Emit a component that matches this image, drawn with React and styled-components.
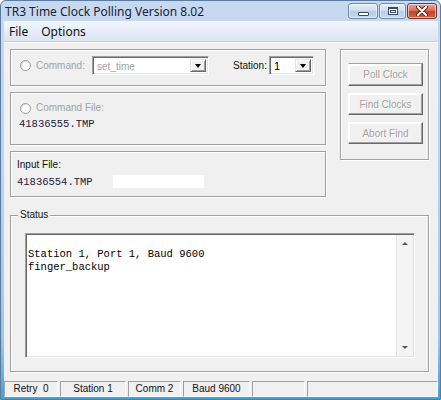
import styled, { createGlobalStyle } from 'styled-components';

const GlobalStyle = createGlobalStyle`
  html, body { margin: 0; padding: 0; background: #fff; }
  body { font-family: 'Liberation Sans', Arial, sans-serif; }
  * { box-sizing: border-box; }
`;

const statusItems = ['Retry  0', 'Station 1', 'Comm 2', 'Baud 9600', '', ''];
const statusWidths = [54, 66, 53, 67, 53];

function App() {
  return (
    <>
      <GlobalStyle />
      <Window>
        <TitleBar>
          <Title>TR3 Time Clock Polling Version 8.02</Title>
          <CaptionButtons>
            <CaptionButton $w={30}>
              <MinGlyph />
            </CaptionButton>
            <CaptionButton $w={27}>
              <MaxGlyph />
            </CaptionButton>
            <CaptionButton $w={30} $close>
              <svg width="12" height="10" viewBox="0 0 12 10">
                <path d="M2 1 L10 9 M10 1 L2 9" stroke="#5a1a10" strokeWidth="4" strokeLinecap="round" />
                <path d="M2 1 L10 9 M10 1 L2 9" stroke="#fff" strokeWidth="2.2" strokeLinecap="round" />
              </svg>
            </CaptionButton>
          </CaptionButtons>
        </TitleBar>

        <Client>
          <MenuBar>
            <MenuItem>File</MenuItem>
            <MenuItem>Options</MenuItem>
          </MenuBar>
          <MenuDivider />

          <Content>
            <TopGrid>
              <LeftColumn>
                <CommandPanel>
                  <Radio />
                  <Label $w={56} $disabled>Command:</Label>
                  <Combo $w={117}>
                    <ComboText $disabled>set_time</ComboText>
                    <DropButton>
                      <DropArrow />
                    </DropButton>
                  </Combo>
                  <Label $w={36} style={{ marginLeft: 24 }}>Station:</Label>
                  <Combo $w={45}>
                    <ComboText>1</ComboText>
                    <DropButton>
                      <DropArrow />
                    </DropButton>
                  </Combo>
                </CommandPanel>

                <FilePanel $h={53} $pt={9} $pl={9}>
                  <RadioRow>
                    <Radio />
                    <Label $disabled>Command File:</Label>
                  </RadioRow>
                  <FileName style={{ marginLeft: -1 }}>41836555.TMP</FileName>
                </FilePanel>

                <FilePanel $h={46} $pt={7} $pl={6}>
                  <Label>Input File:</Label>
                  <InputRow>
                    <FileName $w={96}>41836554.TMP</FileName>
                    <BlankField />
                  </InputRow>
                </FilePanel>
              </LeftColumn>

              <ButtonPanel>
                <ActionButton $h={23} $default>Poll Clock</ActionButton>
                <ActionButton $h={22}>Find Clocks</ActionButton>
                <ActionButton $h={22}>Abort Find</ActionButton>
              </ButtonPanel>
            </TopGrid>

            <StatusGroup>
              <StatusCaption>Status</StatusCaption>
              <LogBox>
                <LogText>
                  {'\n'}Station 1, Port 1, Baud 9600{'\n'}finger_backup
                </LogText>
                <ScrollTrack>
                  <ScrollArrow $up />
                  <ScrollArrow />
                </ScrollTrack>
              </LogBox>
            </StatusGroup>

            <StatusBar>
              {statusItems.map((item, i) => (
                <StatusPane key={i} $w={statusWidths[i]}>
                  {item}
                </StatusPane>
              ))}
            </StatusBar>
          </Content>
        </Client>
      </Window>
    </>
  );
}

export default App;

const Window = styled.div`
  width: 441px;
  height: 400px;
  display: flex;
  flex-direction: column;
  border: 1px solid #5b7aa0;
  border-radius: 6px 6px 0 0;
  padding: 0 2px 2px 3px;
  background: linear-gradient(to bottom, #c6d9f0 0%, #bcd3ee 45%, #9ec6ec 85%, #3ea3dc 100%);
`;

const TitleBar = styled.div`
  height: 20px;
  display: flex;
  justify-content: space-between;
  align-items: flex-start;
`;

const Title = styled.div`
  margin: 3px 0 0 1px;
  font-family: 'Noto Sans', 'Open Sans', sans-serif;
  font-size: 12px;
  line-height: 16px;
  color: #1a2430;
`;

const CaptionButtons = styled.div`
  display: flex;
  gap: 1px;
  margin: 2px 1px 0 0;
`;

const CaptionButton = styled.div`
  width: ${(p) => p.$w}px;
  height: 16px;
  display: flex;
  align-items: center;
  justify-content: center;
  border: 1px solid ${(p) => (p.$close ? '#7a3528' : '#6f87a8')};
  border-radius: 3px;
  background: ${(p) =>
    p.$close
      ? 'linear-gradient(to bottom, #e8a493 0%, #d8735c 45%, #c2432a 55%, #d0634a 100%)'
      : 'linear-gradient(to bottom, #e6eef8 0%, #d0deef 45%, #b8cce6 55%, #c6d7ee 100%)'};
  box-shadow: inset 0 0 0 1px rgba(255, 255, 255, 0.55);
`;

const MinGlyph = styled.div`
  width: 11px;
  height: 4px;
  margin-top: 5px;
  background: #fff;
  border: 1px solid #3a4a60;
  border-radius: 1px;
`;

const MaxGlyph = styled.div`
  width: 10px;
  height: 8px;
  border: 1px solid #3a4a60;
  border-top-width: 2px;
  background: #fff;
  box-shadow: inset 0 0 0 1px #fff, inset 0 0 0 2px #3a4a60;
`;

const Client = styled.div`
  flex: 1;
  display: flex;
  flex-direction: column;
  background: #f0f0f0;
`;

const MenuBar = styled.div`
  height: 20px;
  display: flex;
  align-items: center;
  gap: 13px;
  padding-left: 5px;
  background: linear-gradient(to bottom, #f3f6fb 0%, #e6edf7 50%, #dbe4f2 100%);
`;

const MenuItem = styled.span`
  font-family: 'Noto Sans', 'Open Sans', sans-serif;
  font-size: 12px;
  color: #111;
`;

const MenuDivider = styled.div`
  height: 2px;
  border-top: 1px solid #c9d2dc;
  border-bottom: 1px solid #fff;
`;

const Content = styled.div`
  flex: 1;
  display: flex;
  flex-direction: column;
  padding: 6px 9px 0 6px;
`;

const TopGrid = styled.div`
  display: grid;
  grid-template-columns: 316px 89px;
  column-gap: 14px;
  align-items: start;
`;

const LeftColumn = styled.div`
  display: flex;
  flex-direction: column;
  gap: 6px;
`;

const Etched = styled.div`
  border: 1px solid #a0a0a0;
  box-shadow: inset 1px 1px 0 #fff, 1px 1px 0 #fff;
`;

const CommandPanel = styled(Etched)`
  height: 37px;
  display: flex;
  align-items: center;
  padding: 0 0 4px 9px;
`;

const FilePanel = styled(Etched)`
  height: ${(p) => p.$h}px;
  display: flex;
  flex-direction: column;
  gap: 4px;
  padding: ${(p) => p.$pt}px 0 0 ${(p) => p.$pl}px;
`;

const RadioRow = styled.div`
  display: flex;
  align-items: center;
  height: 12px;
`;

const InputRow = styled.div`
  display: flex;
  align-items: center;
`;

const Radio = styled.span`
  width: 11px;
  height: 11px;
  flex: none;
  margin-right: 5px;
  border-radius: 50%;
  background: #fff;
  border: 1px solid #9c9c9c;
  box-shadow: inset 1px 1px 0 #e0e0e0;
`;

const Label = styled.span`
  width: ${(p) => (p.$w ? `${p.$w}px` : 'auto')};
  flex: none;
  font-size: 10px;
  line-height: 12px;
  color: ${(p) => (p.$disabled ? '#a2a2a2' : '#111')};
`;

const Sunken = styled.div`
  border: 1px solid;
  border-color: #a0a0a0 #fff #fff #a0a0a0;
  box-shadow: inset 1px 1px 0 #696969, inset -1px -1px 0 #e3e3e3;
  background: #fff;
`;

const Combo = styled(Sunken)`
  width: ${(p) => p.$w}px;
  height: 19px;
  display: flex;
  align-items: stretch;
  padding: 2px;
  flex: none;
`;

const ComboText = styled.span`
  flex: 1;
  padding-left: 2px;
  font-size: ${(p) => (p.$disabled ? '10px' : '11px')};
  line-height: 15px;
  color: ${(p) => (p.$disabled ? '#a2a2a2' : '#000')};
`;

const DropButton = styled.div`
  width: 16px;
  display: flex;
  align-items: center;
  justify-content: center;
  background: #f0f0f0;
  border: 1px solid;
  border-color: #e3e3e3 #696969 #696969 #e3e3e3;
  box-shadow: inset 1px 1px 0 #fff, inset -1px -1px 0 #a0a0a0;
`;

const DropArrow = styled.span`
  width: 0;
  height: 0;
  border-left: 3.5px solid transparent;
  border-right: 3.5px solid transparent;
  border-top: 4px solid #000;
`;

const FileName = styled.span`
  width: ${(p) => (p.$w ? `${p.$w}px` : 'auto')};
  flex: none;
  font-family: 'Liberation Mono', 'Courier New', monospace;
  font-size: 10.5px;
  line-height: 12px;
  color: #1e1a3a;
`;

const BlankField = styled.div`
  width: 91px;
  height: 13px;
  background: #fff;
`;

const ButtonPanel = styled(Etched)`
  height: 111px;
  display: flex;
  flex-direction: column;
  align-items: flex-start;
  gap: 7px;
  padding: 13px 0 0 7px;
`;

const ActionButton = styled.button`
  width: 75px;
  height: ${(p) => p.$h}px;
  padding: 0;
  background: #f0f0f0;
  border: 1px solid;
  border-color: ${(p) => (p.$default ? '#a0a0a0' : '#fff')} #696969 #696969 #fff;
  box-shadow: inset -1px -1px 0 #a0a0a0, inset 1px ${(p) => (p.$default ? '2px' : '1px')} 0 #fff;
  font-family: 'Liberation Sans', Arial, sans-serif;
  font-size: 10px;
  color: #a0a0a0;
  text-shadow: 1px 1px 0 #fff;
`;

const StatusGroup = styled(Etched)`
  position: relative;
  height: 157px;
  margin-top: 18px;
  display: flex;
  padding: 17px 13px 13px 14px;
`;

const StatusCaption = styled.span`
  position: absolute;
  top: -7px;
  left: 7px;
  padding: 0 2px;
  background: #f0f0f0;
  font-size: 10px;
  line-height: 12px;
  color: #111;
`;

const LogBox = styled(Sunken)`
  flex: 1;
  display: flex;
  padding: 1px;
`;

const LogText = styled.pre`
  flex: 1;
  margin: 0;
  padding: 0 0 0 1px;
  font-family: 'Liberation Mono', 'Courier New', monospace;
  font-size: 10.5px;
  line-height: 13px;
  color: #000;
`;

const ScrollTrack = styled.div`
  width: 17px;
  display: flex;
  flex-direction: column;
  justify-content: space-between;
  align-items: center;
  padding: 7px 0 7px;
  background: #f4f4f4;
  border-left: 1px solid #e6e6e6;
`;

const ScrollArrow = styled.span`
  width: 0;
  height: 0;
  border-left: 3px solid transparent;
  border-right: 3px solid transparent;
  ${(p) => (p.$up ? 'border-bottom: 3px solid #555;' : 'border-top: 3px solid #555;')}
`;

const StatusBar = styled.div`
  height: 16px;
  margin: 9px -9px 0 -6px;
  display: flex;
  gap: 2px;
`;

const StatusPane = styled.div`
  ${(p) => (p.$w ? `width: ${p.$w}px; flex: none;` : 'flex: 1;')}
  border: 1px solid;
  border-color: #a0a0a0 #fff #fff #a0a0a0;
  font-size: 10px;
  line-height: 14px;
  text-align: center;
  white-space: pre;
  color: #111;
`;
